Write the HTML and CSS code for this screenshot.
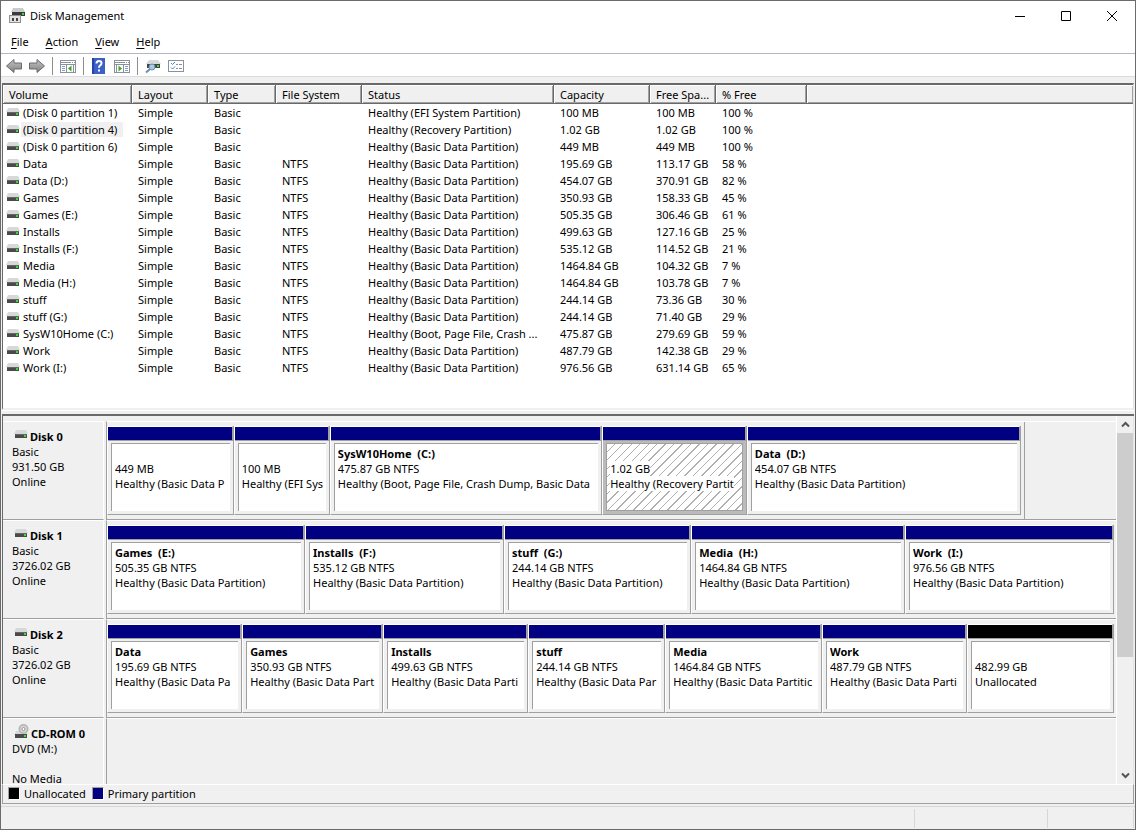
FILE: index.html
```
<!DOCTYPE html>
<html lang="en">
<head>
    <meta charset="UTF-8">
    <meta name="viewport" content="width=device-width, initial-scale=1.0">
    <title>Disk Management</title>
    <link rel="stylesheet" href="styles.css">
</head>
<body>

    <!-- shared icons -->
    <svg class="defs" aria-hidden="true">
        <defs>
            <linearGradient id="steel" x1="0" y1="0" x2="0" y2="1">
                <stop offset="0" stop-color="#c4c4c4"/>
                <stop offset="1" stop-color="#808080"/>
            </linearGradient>
            <symbol id="drive" viewBox="0 0 14 9">
                <path d="M2 0h10l2 4H0z" fill="#d6d8da"/>
                <rect x="1" y="4" width="12" height="4" fill="#4a4a4a"/>
                <rect x="1" y="4" width="12" height="1" fill="#666"/>
                <rect x="10" y="5" width="2" height="2" fill="#35e035"/>
            </symbol>
            <symbol id="cdrom" viewBox="0 0 15 15">
                <path d="M2 7h10l2 4H0z" fill="#d6d8da"/>
                <circle cx="9.500" cy="5" r="5" fill="#b4b4b4"/>
                <circle cx="9.500" cy="5" r="3.500" fill="#d4d4d4"/>
                <circle cx="9.500" cy="5" r="1.500" fill="#fff" stroke="#999"/>
                <rect x="1" y="10" width="12" height="4" fill="#4a4a4a"/>
                <rect x="10" y="11" width="2" height="2" fill="#35e035"/>
            </symbol>
        </defs>
    </svg>

    <div class="window">
        <header class="titlebar">
            <svg class="app-icon" width="16" height="16" viewBox="0 0 16 16">
                <path d="M4 0h10l2 4H2z" fill="#c9cccf"/>
                <rect x="3" y="4" width="13" height="4" fill="#3a3a3a"/>
                <rect x="13" y="5" width="2" height="2" fill="#35e035"/>
                <rect x="0" y="7" width="12" height="8" fill="#8e9194"/>
                <rect x="1" y="8" width="10" height="6" fill="#e0e2e4"/>
                <path d="M3 10h2v3H3zM7 10h2v3H7z" fill="#444"/>
            </svg>
            <h1>Disk Management</h1>
            <div class="window-buttons">
                <button type="button" aria-label="Minimize"><svg width="10" height="10"><path d="M0 5.500h10" stroke="#000"/></svg></button>
                <button type="button" aria-label="Maximize"><svg width="10" height="10"><path d="M.5.5h9v9h-9z" fill="none" stroke="#000"/></svg></button>
                <button type="button" aria-label="Close"><svg width="10" height="10"><path d="M0 0l10 10M10 0L0 10" stroke="#000"/></svg></button>
            </div>
        </header>

        <nav class="menubar">
            <button type="button"><u>F</u>ile</button>
            <button type="button"><u>A</u>ction</button>
            <button type="button"><u>V</u>iew</button>
            <button type="button"><u>H</u>elp</button>
        </nav>

        <div class="toolbar">
            <button type="button" aria-label="Back">
                <svg width="16" height="16" viewBox="0 0 16 16"><path d="M.5 8L8 1.500V5h7.500v6H8v3.500z" fill="url(#steel)" stroke="#6a6a6a"/></svg>
            </button>
            <button type="button" aria-label="Forward">
                <svg width="16" height="16" viewBox="0 0 16 16"><path d="M15.500 8L8 1.500V5H.5v6H8v3.500z" fill="url(#steel)" stroke="#6a6a6a"/></svg>
            </button>
            <span class="separator"></span>
            <button type="button" aria-label="Show console tree">
                <svg width="16" height="16" viewBox="0 0 16 16">
                    <rect x=".5" y="2.500" width="15" height="12" fill="#fff" stroke="#8a919c"/>
                    <path d="M1 4.500h10M12 4.500h1M14 4.500h1M1 6.500h14M6.500 7v7M13.500 7v7" stroke="#8a919c"/>
                    <path d="M2 8.500h3M2 10.500h3M2 12.500h3" stroke="#7da0c4"/>
                    <path d="M11.500 7.500v6L8 10.500z" fill="#3aa52a"/>
                </svg>
            </button>
            <span class="separator"></span>
            <button type="button" aria-label="Help">
                <svg width="16" height="16" viewBox="0 0 16 16">
                    <rect x="1" y="0" width="13" height="16" fill="#3c5fc8"/>
                    <rect x="1" y="0" width="2" height="16" fill="#2443a4"/>
                    <path d="M5.500 5.500q0-2.500 2.500-2.500t2.500 2.300q0 1.500-1.500 2.300-1 .6-1 2.200M8 11.500v2" fill="none" stroke="#fff" stroke-width="2"/>
                </svg>
            </button>
            <button type="button" aria-label="Show action pane">
                <svg width="16" height="16" viewBox="0 0 16 16">
                    <rect x=".5" y="2.500" width="15" height="12" fill="#fff" stroke="#8a919c"/>
                    <path d="M1 4.500h10M12 4.500h1M14 4.500h1M1 6.500h14M9.500 7v7M2.500 7v7" stroke="#8a919c"/>
                    <path d="M11 8.500h3M11 10.500h3M11 12.500h3" stroke="#7da0c4"/>
                    <path d="M4.500 7.500v6L8 10.500z" fill="#3aa52a"/>
                </svg>
            </button>
            <span class="separator"></span>
            <button type="button" aria-label="Rescan disks">
                <svg width="16" height="16" viewBox="0 0 16 16">
                    <path d="M4 2h9l3 4H1z" fill="#d6d8da"/>
                    <rect x="2" y="6" width="13" height="4" fill="#444"/>
                    <rect x="12" y="7" width="2" height="2" fill="#35e035"/>
                    <circle cx="7" cy="9" r="3" fill="#a6cbe6" stroke="#6f8ea8"/>
                    <path d="M5 11l-4 3.500" stroke="#6f8ea8" stroke-width="2"/>
                </svg>
            </button>
            <button type="button" aria-label="Properties">
                <svg width="16" height="16" viewBox="0 0 16 16">
                    <rect x=".5" y="2.500" width="15" height="11" fill="#fff" stroke="#8a919c"/>
                    <path d="M3 5l1.500 1.500L7 4M3 9.500L4.500 11 7 8.500" fill="none" stroke="#3a8ad8"/>
                    <path d="M8 6.500h2M11 6.500h3M8 10.500h2M11 10.500h3" stroke="#8a919c"/>
                </svg>
            </button>
        </div>

        <main>
            <section class="volumes">
                <table>
                    <colgroup>
                        <col class="c-volume"><col class="c-layout"><col class="c-type"><col class="c-fs"><col class="c-status"><col class="c-capacity"><col class="c-space"><col class="c-free"><col>
                    </colgroup>
                    <thead>
                        <tr><th>Volume</th><th>Layout</th><th>Type</th><th>File System</th><th>Status</th><th>Capacity</th><th>Free Spa...</th><th>% Free</th><th></th></tr>
                    </thead>
                    <tbody id="volume-rows"></tbody>
                </table>
            </section>

            <div class="divider"></div>

            <section class="graph">
                <div class="disks" id="disks"></div>
                <div class="scrollbar">
                    <button type="button" aria-label="Scroll up"><svg width="9" height="7"><path d="M1 5.500L4.500 2 8 5.500" fill="none" stroke="#555" stroke-width="2"/></svg></button>
                    <div class="track"><div class="thumb"></div></div>
                    <button type="button" aria-label="Scroll down"><svg width="9" height="7"><path d="M1 1.500L4.500 5 8 1.500" fill="none" stroke="#555" stroke-width="2"/></svg></button>
                </div>
            </section>

            <div class="legend">
                <span class="swatch unallocated"></span><span>Unallocated</span>
                <span class="swatch primary"></span><span>Primary partition</span>
            </div>
        </main>

        <footer class="statusbar">
            <span></span><span></span><span></span>
        </footer>
    </div>

    <script src="script.js"></script>
</body>
</html>
```
FILE: styles.css
```
* {
    margin: 0;
    padding: 0;
    box-sizing: border-box;
}

body {
    font-family: "Noto Sans", "Open Sans", sans-serif;
    font-size: 11px;
    line-height: 15px;
    color: #000;
    background-color: #f0f0f0;
}

button {
    font: inherit;
    color: inherit;
    background: none;
    border: none;
}

svg {
    display: block;
}

.defs {
    position: absolute;
    width: 0;
    height: 0;
}

.window {
    display: flex;
    flex-direction: column;
    height: 100vh;
    border: 1px solid #6b6b6b;
    background-color: #f0f0f0;
}

/* title bar */
.titlebar {
    display: flex;
    align-items: center;
    height: 29px;
    padding-left: 8px;
    background-color: #fff;
}

.titlebar h1 {
    margin-left: 5px;
    font-size: 11px;
    font-weight: normal;
}

.window-buttons {
    display: flex;
    margin-left: auto;
}

.window-buttons button {
    display: flex;
    align-items: center;
    justify-content: center;
    width: 46px;
    height: 28px;
}

/* menu */
.menubar {
    display: flex;
    gap: 1px;
    height: 24px;
    padding-left: 2px;
    background-color: #fff;
    border-bottom: 1px solid #b4b6c4;
}

.menubar button {
    padding: 0 8px;
}

.menubar u {
    text-underline-offset: 2px;
}

/* toolbar */
.toolbar {
    display: flex;
    align-items: center;
    gap: 7px;
    height: 23px;
    padding: 2px 0 0 5px;
    background-color: #fff;
    border-bottom: 1px solid #dcdcdc;
}

.separator {
    width: 1px;
    height: 18px;
    background-color: #8d8d8d;
}

main {
    display: flex;
    flex-direction: column;
    flex: 1;
    min-height: 0;
    margin: 6px 1px 0;
}

/* volume list */
.volumes {
    flex: 1;
    min-height: 0;
    overflow: hidden;
    background-color: #fff;
    border-top: 2px solid #696969;
    border-left: 1px solid #696969;
    border-right: 1px solid #e3e3e3;
    border-bottom: 2px solid #f0f0f0;
}

.volumes table {
    width: 100%;
    table-layout: fixed;
    border-collapse: separate;
    border-spacing: 0;
}

.c-volume { width: 129px; }
.c-layout { width: 76px; }
.c-type { width: 68px; }
.c-fs { width: 86px; }
.c-status { width: 192px; }
.c-capacity { width: 96px; }
.c-space { width: 66px; }
.c-free { width: 91px; }

.volumes th,
.volumes td {
    padding-left: 6px;
    text-align: left;
    font-weight: normal;
    white-space: nowrap;
    overflow: hidden;
}

.volumes th {
    height: 19px;
    background-color: #f0f0f0;
    border-bottom: 1px solid #696969;
    border-right: 1px solid #696969;
    box-shadow: inset 1px 1px #fff, inset -1px -1px #a0a0a0;
}

.volumes th:last-child {
    border-right: none;
}

.volumes td {
    height: 17px;
}

.volumes td:first-child {
    padding-left: 3px;
}

.volume {
    display: flex;
    align-items: center;
}

.volume span {
    padding: 0 6px 0 2px;
    margin-left: 1px;
}

.volume .selected {
    background-color: #f0f0f0;
}

.divider {
    height: 6px;
    border-top: 1px solid #fff;
    border-bottom: 2px solid #696969;
}

/* graphical view */
.graph {
    display: flex;
    height: 368px;
    overflow: hidden;
    border-left: 1px solid #696969;
    border-right: 1px solid #e3e3e3;
}

.disks {
    flex: 1;
    min-width: 0;
    padding-top: 5px;
}

.disk {
    display: flex;
    height: 99px;
}

.disk-label {
    flex: none;
    width: 101px;
    padding: 7px 0 0 9px;
    border-top: 1px solid #fff;
    border-right: 1px solid #fff;
    border-bottom: 1px solid #a0a0a0;
}

.disk-label h2 {
    display: flex;
    align-items: center;
    height: 15px;
    padding-left: 2px;
    font-size: 11px;
}

.disk-label h2 svg {
    margin: 0 2px 4px 0;
}

.disk-map {
    flex: 1;
    min-width: 0;
    margin-left: 2px;
    border-left: 1px solid #a0a0a0;
    border-top: 1px solid #fff;
    border-bottom: 1px solid #a0a0a0;
}

.partitions {
    display: flex;
    height: 97px;
    padding: 4px 2px 4px 0;
}

.partitions.short {
    width: 91%;
    border-right: 1px solid #a0a0a0;
    padding-right: 3px;
}

.partition {
    flex: 1 1 0;
    min-width: 0;
    border-left: 1px solid #fff;
    border-right: 1px solid #a0a0a0;
    border-bottom: 1px solid #a0a0a0;
}

.partition .bar {
    height: 15px;
    border-top: 1px solid #fff;
    border-right: 1px solid #a0a0a0;
    border-bottom: 1px solid #a0a0a0;
    background-color: #000080;
}

.partition .bar.unallocated {
    background-color: #000;
}

.partition .info {
    height: 68px;
    margin: 2px 3px;
    padding: 2px 3px 0;
    border-top: 1px solid #a0a0a0;
    border-left: 1px solid #a0a0a0;
    background-color: #fff;
}

.partition p {
    height: 15px;
    overflow: hidden;
    white-space: pre;
}

.partition .name {
    font-weight: bold;
}

.partition.active {
    background-color: #bbb;
}

.partition.active .info {
    border: 1px solid #a0a0a0;
    background: repeating-linear-gradient(135deg, #fff 0 5px, #b0b0b0 5px 6px);
}

.partition.active p {
    width: fit-content;
    max-width: 100%;
    background-color: #fff;
}

/* scroll bar */
.scrollbar {
    display: flex;
    flex-direction: column;
    width: 17px;
    border-left: 1px solid #fff;
}

.scrollbar button {
    display: flex;
    align-items: center;
    justify-content: center;
    height: 17px;
}

.track {
    flex: 1;
}

.thumb {
    height: 67%;
    background-color: #cdcdcd;
}

/* legend */
.legend {
    display: flex;
    align-items: center;
    height: 20px;
    padding: 0 0 2px 5px;
    border: 1px solid #a0a0a0;
    border-top-color: #fff;
}

.swatch {
    width: 12px;
    height: 13px;
    margin-right: 4px;
    border: 1px solid #a0a0a0;
    border-right-color: #fff;
    border-bottom-color: #fff;
}

.swatch.unallocated {
    background-color: #000;
}

.swatch.primary {
    margin-left: 6px;
    background-color: #000080;
}

/* status bar */
.statusbar {
    display: flex;
    height: 23px;
    padding: 2px 1px 1px;
    margin-top: 2px;
    border-top: 1px solid #d7d7d7;
}

.statusbar span {
    border-right: 1px solid #d7d7d7;
    width: 86px;
}

.statusbar span:first-child {
    flex: 1;
}

.statusbar span:nth-child(2) {
    width: 133px;
}
```
FILE: script.js
```
const basic = 'Healthy (Basic Data Partition)';

// name, file system, status, capacity, free space, % free
const volumes = [
    ['(Disk 0 partition 1)', '', 'Healthy (EFI System Partition)', '100 MB', '100 MB', '100 %'],
    ['(Disk 0 partition 4)', '', 'Healthy (Recovery Partition)', '1.02 GB', '1.02 GB', '100 %'],
    ['(Disk 0 partition 6)', '', basic, '449 MB', '449 MB', '100 %'],
    ['Data', 'NTFS', basic, '195.69 GB', '113.17 GB', '58 %'],
    ['Data (D:)', 'NTFS', basic, '454.07 GB', '370.91 GB', '82 %'],
    ['Games', 'NTFS', basic, '350.93 GB', '158.33 GB', '45 %'],
    ['Games (E:)', 'NTFS', basic, '505.35 GB', '306.46 GB', '61 %'],
    ['Installs', 'NTFS', basic, '499.63 GB', '127.16 GB', '25 %'],
    ['Installs (F:)', 'NTFS', basic, '535.12 GB', '114.52 GB', '21 %'],
    ['Media', 'NTFS', basic, '1464.84 GB', '104.32 GB', '7 %'],
    ['Media (H:)', 'NTFS', basic, '1464.84 GB', '103.78 GB', '7 %'],
    ['stuff', 'NTFS', basic, '244.14 GB', '73.36 GB', '30 %'],
    ['stuff (G:)', 'NTFS', basic, '244.14 GB', '71.40 GB', '29 %'],
    ['SysW10Home (C:)', 'NTFS', 'Healthy (Boot, Page File, Crash ...', '475.87 GB', '279.69 GB', '59 %'],
    ['Work', 'NTFS', basic, '487.79 GB', '142.38 GB', '29 %'],
    ['Work (I:)', 'NTFS', basic, '976.56 GB', '631.14 GB', '65 %']
];

// each part: width share, name, size, status
const disks = [
    { name: 'Disk 0', lines: ['Basic', '931.50 GB', 'Online'], short: true, parts: [
        [126, '', '449 MB', 'Healthy (Basic Data P'],
        [95, '', '100 MB', 'Healthy (EFI Sys'],
        [273, 'SysW10Home  (C:)', '475.87 GB NTFS', 'Healthy (Boot, Page File, Crash Dump, Basic Data'],
        [144, '', '1.02 GB', 'Healthy (Recovery Partit'],
        [275, 'Data  (D:)', '454.07 GB NTFS', basic]
    ] },
    { name: 'Disk 1', lines: ['Basic', '3726.02 GB', 'Online'], parts: [
        [198, 'Games  (E:)', '505.35 GB NTFS', basic],
        [199, 'Installs  (F:)', '535.12 GB NTFS', basic],
        [187, 'stuff  (G:)', '244.14 GB NTFS', basic],
        [214, 'Media  (H:)', '1464.84 GB NTFS', basic],
        [209, 'Work  (I:)', '976.56 GB NTFS', basic]
    ] },
    { name: 'Disk 2', lines: ['Basic', '3726.02 GB', 'Online'], parts: [
        [135, 'Data', '195.69 GB NTFS', 'Healthy (Basic Data Pa'],
        [141, 'Games', '350.93 GB NTFS', 'Healthy (Basic Data Part'],
        [145, 'Installs', '499.63 GB NTFS', 'Healthy (Basic Data Parti'],
        [137, 'stuff', '244.14 GB NTFS', 'Healthy (Basic Data Par'],
        [157, 'Media', '1464.84 GB NTFS', 'Healthy (Basic Data Partitic'],
        [145, 'Work', '487.79 GB NTFS', 'Healthy (Basic Data Parti'],
        [147, '', '482.99 GB', 'Unallocated']
    ] },
    { name: 'CD-ROM 0', lines: ['DVD (M:)', '', 'No Media'], cd: true, parts: [] }
];

const drive = '<svg width="14" height="9"><use href="#drive"/></svg>';
const cdrom = '<svg width="15" height="15"><use href="#cdrom"/></svg>';

document.getElementById('volume-rows').innerHTML = volumes.map((v, i) => `
    <tr>
        <td><div class="volume">${drive}<span class="${i === 1 ? 'selected' : ''}">${v[0]}</span></div></td>
        <td>Simple</td><td>Basic</td>
        ${v.slice(1).map(text => `<td>${text}</td>`).join('')}<td></td>
    </tr>`).join('');

function partition(p) {
    const active = p[2] === '1.02 GB' ? 'active' : '';
    const unallocated = p[3] === 'Unallocated' ? 'unallocated' : '';
    return `<div class="partition ${active}" style="flex-grow: ${p[0]}">
        <div class="bar ${unallocated}"></div>
        <div class="info"><p class="name">${p[1]}</p><p>${p[2]}</p><p>${p[3]}</p></div>
    </div>`;
}

document.getElementById('disks').innerHTML = disks.map(d => `
    <div class="disk">
        <div class="disk-label">
            <h2>${d.cd ? cdrom : drive}${d.name}</h2>
            ${d.lines.map(line => `<p>${line || '&nbsp;'}</p>`).join('')}
        </div>
        <div class="disk-map">
            ${d.parts.length ? `<div class="partitions ${d.short ? 'short' : ''}">${d.parts.map(partition).join('')}</div>` : ''}
        </div>
    </div>`).join('');
```
